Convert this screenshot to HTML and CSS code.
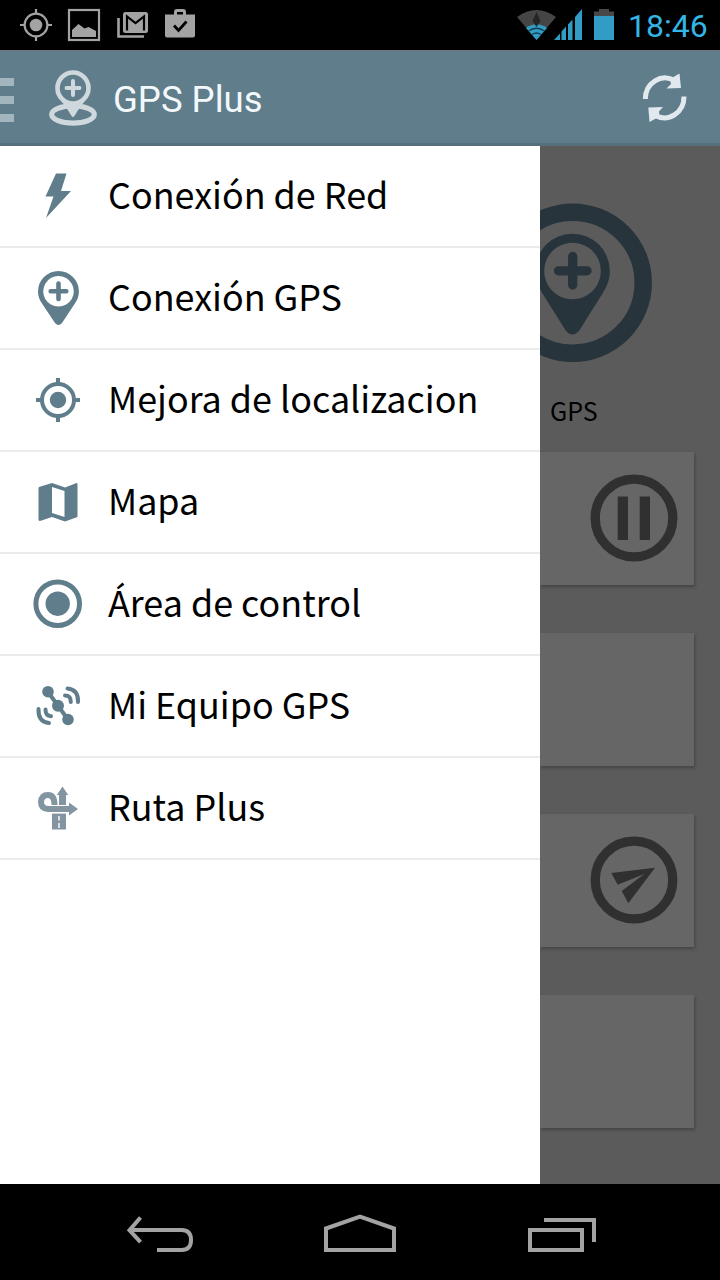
FILE: index.html
```html
<!DOCTYPE html>
<html lang="es">
<head>
<meta charset="utf-8">
<title>GPS Plus</title>
<link rel="stylesheet" href="styles.css">
</head>
<body>
<header class="status">
  <svg class="status-left" viewBox="0 0 210 50" width="210" height="50">
    <g fill="none" stroke="#a3a3a3" stroke-width="2.2">
      <circle cx="36" cy="25" r="11.4"/>
      <path d="M36 9v5M36 36v5M20 25h5M47 25h5"/>
      <rect x="69" y="10" width="30" height="30" stroke-width="2.2"/>
      <path d="M118.500 18v18.500H144" stroke-width="2.600"/>
    </g>
    <g fill="#a3a3a3">
      <circle cx="36" cy="25" r="6.300"/>
      <path d="M72 30l6.500-6 6 4.500 4-1.500 7.500 4v6H72z"/>
      <rect x="123" y="12" width="25" height="21" rx="2.500"/>
      <path fill-rule="evenodd" d="M165 14.500h9v-2.500q0-3 3-3h6q3 0 3 3v2.500h9v21q0 2-2 2h-26q-2 0-2-2zM177 14.500h6v-2.500h-6z"/>
    </g>
    <path d="M127 30.500V16.500l8.500 6.500 8.500-6.500v14" fill="none" stroke="#000" stroke-width="2.200"/>
    <path d="M174 25.500l4.500 5 8-9" fill="none" stroke="#000" stroke-width="2.800"/>
  </svg>
  <div class="status-right">
    <svg viewBox="515 0 105 50" width="105" height="50">
      <path d="M517 17Q536.500 3 556 17L536.500 40z" fill="#454545"/>
      <path d="M526 28Q536.500 20.500 547 28L536.500 40z" fill="#319dc4"/>
      <path d="M528.500 31Q536.500 25.500 544.500 31M532 34.500q4.500-3 9 0" fill="none" stroke="#123d50" stroke-width="1.300"/>
      <path d="M536.500 12l4 9-4 6-4-6z" fill="#252525"/>
      <path d="M554 40h6v-6.500zM561.500 40h4.500v-13.500l-4.500 5zM568 40h4.500v-20.500l-4.500 5zM575 40h7V9l-7 8z" fill="#319dc4"/>
      <path d="M594 11.500h5v-2.500h10v2.500h5v5h-20z" fill="#484848"/>
      <path d="M594 16h20v24h-20z" fill="#319dc4"/>
    </svg>
    <time class="clock">18:46</time>
  </div>
</header>

<nav class="appbar">
  <svg class="brand" viewBox="0 50 108 96" width="108" height="96">
    <path d="M0 78h14v8H0zM0 96h14v8H0zM0 114h14v8H0z" fill="#a3b6be"/>
    <g fill="none" stroke="#ced8dd">
      <ellipse cx="73" cy="114.500" rx="21.300" ry="8.600" stroke-width="5.200"/>
      <path d="M83.500 100.500C79.500 104 76 111 73 115.500C70 111 66.500 104 62.500 100.500" fill="#ced8dd" stroke-width="3" stroke-linejoin="round"/>
      <circle cx="73" cy="88" r="15.500" fill="#607d8b" stroke-width="4.600"/>
      <path d="M73 81v14M66.500 88h13" stroke-width="4" stroke-linecap="round"/>
    </g>
  </svg>
  <h1 class="title">GPS Plus</h1>
  <svg class="sync" viewBox="620 50 100 96" width="100" height="96">
    <g fill="none" stroke="#e1e8ee" stroke-width="5">
      <path d="M645.300 99C645.500 83 661 72.500 675.500 81"/>
      <path d="M684 96.500C684 112.500 669 122.500 655 115.500"/>
    </g>
    <path d="M679.500 73.500L681 88 666.500 88.500 671 84 670 79zM648.300 107.500L663 107 659 111.500 659.500 116.500 649.500 122z" fill="#e1e8ee"/>
  </svg>
</nav>

<div class="body">
  <ul class="drawer">
    <li class="item">
      <svg viewBox="0 146 108 100" width="108" height="100"><path d="M56 173.500h10.500L61 191h10L46 218l7.500-21.500H45.500z" fill="#607d8b"/></svg>
      <span class="label">Conexión de Red</span>
    </li>
    <li class="item">
      <svg viewBox="0 248 108 100" width="108" height="100">
        <path fill-rule="evenodd" d="M58.500 271a20.400 20.400 0 0 1 20.400 20.400c0 4.500-1.500 8.500-4 12L62 323q-3.500 4-7 0L42 303.400c-2.500-3.500-4-7.500-4-12A20.400 20.400 0 0 1 58.500 271zM58.500 276a15.300 15.300 0 1 0 .01 0z" fill="#607d8b"/>
        <path d="M58.500 283.500v15.500M50.700 291.300h15.600" fill="none" stroke="#607d8b" stroke-width="4.600" stroke-linecap="round"/>
      </svg>
      <span class="label">Conexión GPS</span>
    </li>
    <li class="item">
      <svg viewBox="0 350 108 100" width="108" height="100">
        <circle cx="58" cy="400" r="16" fill="none" stroke="#607d8b" stroke-width="4"/>
        <path d="M58 378v6M58 416v6M36 400h6M74 400h6" stroke="#607d8b" stroke-width="4"/>
        <circle cx="58" cy="400" r="8.200" fill="#607d8b"/>
      </svg>
      <span class="label">Mejora de localizacion</span>
    </li>
    <li class="item">
      <svg viewBox="0 452 108 100" width="108" height="100"><path fill-rule="evenodd" d="M39 487L52 483l13 4.500 11.500-4.500q1 0 1 1V517L65 521.500l-13-4.500-12 4q-1.500 0-1.500-1.500V488zM52 487v26l12.500 4V491z" fill="#607d8b"/></svg>
      <span class="label">Mapa</span>
    </li>
    <li class="item">
      <svg viewBox="0 554 108 100" width="108" height="100">
        <circle cx="57.700" cy="603.700" r="21.800" fill="none" stroke="#607d8b" stroke-width="5"/>
        <circle cx="57.700" cy="603.700" r="12.200" fill="#607d8b"/>
      </svg>
      <span class="label">Área de control</span>
    </li>
    <li class="item">
      <svg viewBox="0 656 108 100" width="108" height="100">
        <g fill="#607d8b">
          <circle cx="48" cy="691.700" r="5.800"/><circle cx="58" cy="705.700" r="6"/><circle cx="68" cy="719.500" r="5.800"/>
        </g>
        <g fill="none" stroke="#607d8b" stroke-width="4" stroke-linecap="round">
          <path d="M48 692L68 719.500"/>
          <path d="M65 695.500Q71 695.500 70.800 702M67.500 688.500Q78.500 689.500 78 702"/>
          <path d="M45.500 709.500Q45.500 716 51 716.200M38.500 709Q38 722 49 723"/>
        </g>
      </svg>
      <span class="label">Mi Equipo GPS</span>
    </li>
    <li class="item">
      <svg viewBox="0 758 108 100" width="108" height="100">
        <g fill="#8395a1">
          <path d="M62.500 786.500l5.700 8.500h-2.200v10h-7v-10h-2.200zM69 802.500l9 6.500-9 6.500z"/>
          <path fill-rule="evenodd" d="M52 813.500h14v16h-14zM58.300 816v4.500h1.400V816zM58.300 823v5h1.400v-5z"/>
        </g>
        <path d="M70 809H48Q41 808.500 41 802Q41.500 795 48 795Q54.500 795 54.500 805" fill="none" stroke="#8395a1" stroke-width="6"/>
        <path d="M50 805.500h19M50 812.700h19" stroke="#fff" stroke-width="1"/>
      </svg>
      <span class="label">Ruta Plus</span>
    </li>
  </ul>

  <main class="main">
    <svg class="gps" viewBox="540 146 180 240" width="180" height="240">
      <circle cx="572.700" cy="282.700" r="70.500" fill="none" stroke="#28343b" stroke-width="17.500"/>
      <path fill-rule="evenodd" d="M572.500 233.700a37.300 37.300 0 0 1 37.300 37.300c0 8-2.500 15-7 22L579 331q-6.500 7-13 0L542.200 293c-4.500-7-7-14-7-22a37.300 37.300 0 0 1 37.300-37.300zM572.500 242.700a28.300 28.300 0 1 0 .01 0z" fill="#28343b"/>
      <path d="M572.700 256.500v28.500M558.500 270.800h28.500" fill="none" stroke="#28343b" stroke-width="9.300" stroke-linecap="round"/>
    </svg>
    <div class="gps-label">GPS</div>
    <div class="cards">
      <section class="card">
        <svg viewBox="0 0 88 88" width="88" height="88">
          <circle cx="44" cy="44" r="38.800" fill="none" stroke="#303031" stroke-width="9.300"/>
          <path d="M27.700 22.500h10.300v43.500H27.700zM49.700 22.500H60v43.500H49.700z" fill="#303031"/>
        </svg>
      </section>
      <section class="card"></section>
      <section class="card">
        <svg viewBox="0 0 88 88" width="88" height="88">
          <circle cx="44" cy="44" r="38.800" fill="none" stroke="#303031" stroke-width="9.300"/>
          <path d="M21.300 37L65 31.700 38.300 67.300 31.700 55 54.300 38 27.700 48.700z" fill="#303031"/>
        </svg>
      </section>
      <section class="card"></section>
    </div>
  </main>
</div>

<footer class="navbar">
  <svg viewBox="0 1184 720 96" width="720" height="96">
    <g fill="none" stroke="#a3a3a3" stroke-width="4">
      <path d="M132 1230h49.500q9.500 0 9.500 10t-9.500 10H157"/>
      <path d="M140.500 1217.500L129.500 1230.200l11 12"/>
      <path d="M326 1228.500l34-12 34 12V1250h-68z"/>
      <path d="M530 1230h52v20h-52zM544 1220h50v22"/>
    </g>
  </svg>
</footer>
</body>
</html>
```

FILE: styles.css
```css
* { box-sizing: border-box; }
body {
  margin: 0;
  width: 720px;
  height: 1280px;
  display: flex;
  flex-direction: column;
  overflow: hidden;
  background: #000;
  font-family: "Noto Sans CJK SC", "Noto Sans", sans-serif;
}
svg { display: block; flex: none; }
.status {
  height: 50px;
  display: flex;
  justify-content: space-between;
  background: #000;
}
.status-right { display: flex; width: 205px; }
.clock {
  padding-left: 8px;
  font: 400 32px/52px Roboto, sans-serif;
  color: #33b5e5;
  white-space: nowrap;
}
.appbar {
  height: 96px;
  display: flex;
  background: #607d8b;
  border-top: 1px solid #6d7581;
  border-bottom: 3px solid #566f7c;
}
.brand, .sync { margin-top: -1px; }
.title {
  flex: 1;
  margin: 0;
  padding-left: 5px;
  font: 400 36.5px/97px Roboto, sans-serif;
  color: #f3f8fb;
}
.body { height: 1038px; display: flex; }
.drawer {
  width: 540px;
  margin: 0;
  padding: 0;
  list-style: none;
  background: #fff;
}
.item {
  height: 102px;
  display: flex;
  border-bottom: 2px solid #ebebeb;
}
.label {
  font-size: 35.9px;
  line-height: 94px;
  color: #000;
  white-space: nowrap;
}
.main {
  width: 180px;
  background: #5b5b5b;
  overflow: hidden;
}
.gps-label {
  height: 66px;
  padding-left: 10px;
  font-size: 25px;
  line-height: 49px;
  color: #000;
}
.cards {
  display: flex;
  flex-direction: column;
  gap: 48px;
  padding-right: 26px;
}
.card {
  height: 133px;
  display: flex;
  align-items: flex-start;
  justify-content: flex-end;
  padding: 22px 16px 0 0;
  background: #666;
  box-shadow: 1px 2px 3px rgba(0, 0, 0, .25);
}
.navbar { height: 96px; background: #000; }
```
